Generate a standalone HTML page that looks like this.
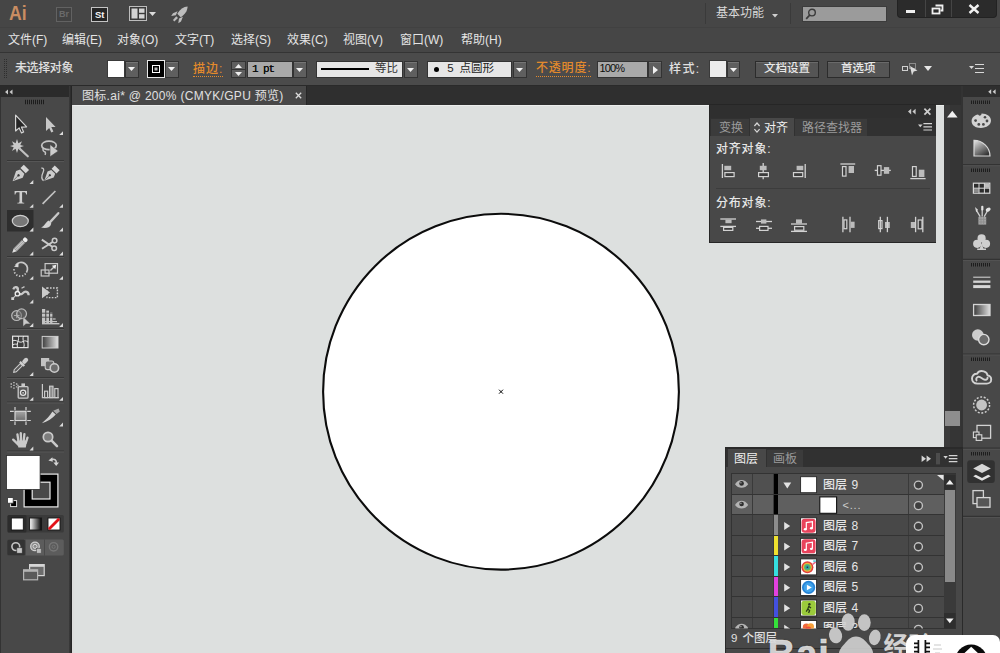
<!DOCTYPE html>
<html lang="zh-CN"><head><meta charset="utf-8"><title>图标.ai* @ 200% (CMYK/GPU 预览)</title>
<style>
html,body{margin:0;padding:0;background:#474747;}
body{width:1000px;height:653px;overflow:hidden;font-family:"Liberation Sans","Noto Sans CJK SC",sans-serif;}
#app{position:relative;width:1000px;height:653px;overflow:hidden;background:#474747;}
#app div,#app span.tx,#app svg.ic{position:absolute;box-sizing:border-box;}
.tx{display:block;line-height:1;white-space:nowrap;overflow:visible;font-family:"Liberation Sans","Noto Sans CJK SC",sans-serif;}
.lat{position:absolute;white-space:nowrap;line-height:1;}
</style></head>
<body>
<div id="app">
<div style="left:72px;top:104.8px;width:872px;height:548.2px;background:#dde0df;border-top:1.4px solid #eceeed;border-left:2px solid #dcdddc"></div>
<svg class="ic" style="left:72px;top:105px" width="872" height="548"><circle cx="429.0" cy="286.7" r="177.9" fill="#fff" stroke="#0c0c0c" stroke-width="2.1"/><path d="M-2-2L2 2M2-2L-2 2" transform="translate(429.0,286.7)" stroke="#0a0a0a" stroke-width="1"/></svg>
<div style="left:0px;top:0px;width:1000px;height:27px;background:#464646;"></div>
<span class="lat" style="left:9px;top:2.4px;font-size:21px;font-weight:bold;color:#c98d62;transform:scaleX(.84);transform-origin:0 0">Ai</span>
<div style="left:705px;top:3px;width:1px;height:21px;background:#3a3a3a;"></div>
<div style="left:790px;top:3px;width:1px;height:21px;background:#3a3a3a;"></div>
<span class="tx " style="left:716.0px;top:7.0px;width:48.0px;height:15.0px;font-size:12px;color:#d8d8d8">基本功能</span>
<div style="left:802px;top:6px;width:85px;height:16px;background:#9b9b9b;border:1px solid #3c3c3c"></div>
<div style="left:897px;top:0px;width:100px;height:18px;background:#2b2b2b;border-radius:0 0 4px 4px;border:1px solid #222;border-top:0"></div>
<div style="left:925px;top:0px;width:1px;height:17px;background:#454545;"></div>
<div style="left:951px;top:0px;width:1px;height:17px;background:#454545;"></div>
<div style="left:0px;top:27px;width:1000px;height:26px;background:#464646;border-top:1px solid #414141;border-bottom:1px solid #343434"></div>
<span class="tx " style="left:8.0px;top:33.5px;width:38.7px;height:15.0px;font-size:12px;color:#e4e4e4">文件(F)</span>
<span class="tx " style="left:62.0px;top:33.5px;width:39.2px;height:15.0px;font-size:12px;color:#e4e4e4">编辑(E)</span>
<span class="tx " style="left:117.0px;top:33.5px;width:41.0px;height:15.0px;font-size:12px;color:#e4e4e4">对象(O)</span>
<span class="tx " style="left:175.0px;top:33.5px;width:39.3px;height:15.0px;font-size:12px;color:#e4e4e4">文字(T)</span>
<span class="tx " style="left:231.0px;top:33.5px;width:39.3px;height:15.0px;font-size:12px;color:#e4e4e4">选择(S)</span>
<span class="tx " style="left:287.0px;top:33.5px;width:39.8px;height:15.0px;font-size:12px;color:#e4e4e4">效果(C)</span>
<span class="tx " style="left:343.0px;top:33.5px;width:39.0px;height:15.0px;font-size:12px;color:#e4e4e4">视图(V)</span>
<span class="tx " style="left:400.0px;top:33.5px;width:42.6px;height:15.0px;font-size:12px;color:#e4e4e4">窗口(W)</span>
<span class="tx " style="left:461.0px;top:33.5px;width:40.8px;height:15.0px;font-size:12px;color:#e4e4e4">帮助(H)</span>
<div style="left:0px;top:53px;width:1000px;height:33px;background:#4b4b4b;border-bottom:1px solid #2a2a2a"></div>
<span class="tx " style="left:15.0px;top:61.5px;width:58.0px;height:15.0px;font-size:12px;font-weight:500;color:#e0e0e0;letter-spacing:-.4px">未选择对象</span>
<div style="left:107px;top:60px;width:18px;height:18px;background:#fff;border:1px solid #3a3a3a"></div>
<div style="left:147px;top:60px;width:18px;height:18px;background:#000;border:1px solid #e8e8e8"></div>
<span class="tx " style="left:193.0px;top:62.5px;width:30.0px;height:15.0px;font-size:12px;font-weight:500;color:#e38a2c;letter-spacing:1px">描边:</span>
<div style="left:247px;top:61px;width:46px;height:17px;background:#a9a9a9;border:1px solid #333"></div>
<span class="lat" style="left:252px;top:63.5px;font-family:'Liberation Mono',monospace;font-size:11px;color:#0c0c0c;letter-spacing:-1.1px;text-shadow:0 0 .4px #111">1 pt</span>
<div style="left:316px;top:61px;width:87px;height:17px;background:#e6e6e6;border:1px solid #333"></div>
<div style="left:321px;top:67.6px;width:48px;height:2.7px;background:#000;"></div>
<span class="tx " style="left:375.0px;top:63.2px;width:23.0px;height:14.4px;font-size:11.5px;color:#333">等比</span>
<div style="left:427px;top:61px;width:85px;height:17px;background:#e6e6e6;border:1px solid #333"></div>
<div style="left:434px;top:67px;width:5px;height:5px;background:#000;border-radius:50%"></div>
<span class="tx " style="left:447.3px;top:63.2px;width:6.4px;height:14.4px;font-size:11.5px;color:#222">5</span>
<span class="tx " style="left:459.6px;top:63.2px;width:34.5px;height:14.4px;font-size:11.5px;color:#222">点圆形</span>
<span class="tx " style="left:536.0px;top:62.0px;width:55.0px;height:15.0px;font-size:12px;font-weight:500;color:#e38a2c;letter-spacing:.8px">不透明度:</span>
<div style="left:597px;top:61px;width:51px;height:17px;background:#a9a9a9;border:1px solid #333"></div>
<span class="lat" style="left:599.5px;top:62.5px;font-size:11px;color:#0c0c0c;letter-spacing:-.9px">100%</span>
<span class="tx " style="left:669.0px;top:62.5px;width:31.0px;height:15.0px;font-size:12px;font-weight:500;color:#e0e0e0;letter-spacing:1.4px">样式:</span>
<div style="left:709px;top:60px;width:18px;height:18px;background:#ebebeb;border:1px solid #3a3a3a"></div>
<div style="left:755px;top:61px;width:64px;height:17px;background:#555;border:1px solid #2c2c2c;box-shadow:inset 0 1px 0 #6a6a6a"></div>
<span class="tx " style="left:764.0px;top:63.2px;width:46.0px;height:14.4px;font-size:11.5px;font-weight:500;color:#e8e8e8">文档设置</span>
<div style="left:827px;top:61px;width:63px;height:17px;background:#555;border:1px solid #2c2c2c;box-shadow:inset 0 1px 0 #6a6a6a"></div>
<span class="tx " style="left:841.0px;top:63.2px;width:35.0px;height:14.4px;font-size:11.5px;font-weight:500;color:#e8e8e8">首选项</span>
<div style="left:0px;top:86px;width:1000px;height:19px;background:#2f2f2f;"></div>
<div style="left:72px;top:86px;width:235.2px;height:18.5px;background:#484848;border-right:1px solid #262626"></div>
<span class="tx " style="left:82.0px;top:89.5px;width:198.5px;height:15.0px;font-size:12px;color:#e0e0e0;letter-spacing:.3px">图标.ai* @ 200% (CMYK/GPU 预览)</span>
<div style="left:0px;top:97px;width:69.5px;height:556px;background:#484848;border-left:1px solid #333"></div>
<div style="left:0px;top:85.5px;width:69.5px;height:11.5px;background:#2b2b2b;"></div>
<div style="left:68.6px;top:86px;width:3.5px;height:567px;background:linear-gradient(90deg,#3c3c3c,#202020);"></div>
<div style="left:944px;top:105px;width:17px;height:343px;background:linear-gradient(90deg,#3b3b3b 0,#3b3b3b 35%,#353535 36%,#353535 100%);"></div>
<div style="left:944.7px;top:411px;width:15.6px;height:15px;background:#8e8e8e;"></div>
<div style="left:961px;top:86px;width:39px;height:567px;background:#333;"></div>
<div style="left:963px;top:97px;width:37px;height:556px;background:#484848;"></div>
<div style="left:963px;top:86px;width:37px;height:11px;background:#2f2f2f;"></div>
<div style="left:709px;top:104px;width:227.4px;height:138.8px;background:#262626;"></div>
<div style="left:710px;top:105px;width:225.6px;height:136.8px;background:#484848;"></div>
<div style="left:710px;top:105px;width:226px;height:13px;background:#2f2f2f;"></div>
<div style="left:710px;top:118px;width:226px;height:18px;background:#313131;"></div>
<div style="left:711px;top:119px;width:38px;height:17px;background:#3b3b3b;"></div>
<div style="left:750px;top:118px;width:44px;height:18px;background:#484848;"></div>
<div style="left:795px;top:119px;width:72px;height:17px;background:#3b3b3b;"></div>
<span class="tx " style="left:719.0px;top:121.5px;width:24.0px;height:15.0px;font-size:12px;color:#9a9a9a">变换</span>
<span class="tx " style="left:764.0px;top:121.5px;width:24.0px;height:15.0px;font-size:12px;color:#f0f0f0">对齐</span>
<span class="tx " style="left:802.0px;top:121.5px;width:60.0px;height:15.0px;font-size:12px;color:#9a9a9a">路径查找器</span>
<span class="tx " style="left:716.0px;top:142.5px;width:55.0px;height:15.0px;font-size:12px;font-weight:500;color:#e6e6e6;letter-spacing:.8px">对齐对象:</span>
<div style="left:716px;top:188px;width:214px;height:1px;background:#3c3c3c;"></div>
<span class="tx " style="left:716.0px;top:196.5px;width:55.0px;height:15.0px;font-size:12px;font-weight:500;color:#e6e6e6;letter-spacing:.8px">分布对象:</span>
<div style="left:725px;top:447px;width:238px;height:206px;background:#2a2a2a;"></div>
<div style="left:726px;top:449px;width:236px;height:204px;background:#484848;"></div>
<div style="left:726px;top:449px;width:236px;height:18px;background:#313131;"></div>
<div style="left:728px;top:449px;width:38px;height:18px;background:#484848;"></div>
<div style="left:767px;top:450px;width:36px;height:17px;background:#3b3b3b;"></div>
<span class="tx " style="left:734.0px;top:452.5px;width:24.0px;height:15.0px;font-size:12px;color:#f0f0f0">图层</span>
<span class="tx " style="left:773.0px;top:452.5px;width:24.0px;height:15.0px;font-size:12px;color:#9a9a9a">画板</span>
<div style="left:731px;top:473px;width:225px;height:156px;background:#333;"></div>
<div style="left:732px;top:474px;width:212px;height:19.55px;background:#505050;"></div>
<div style="left:752px;top:474px;width:1px;height:19.55px;background:#3a3a3a;"></div>
<div style="left:773px;top:474px;width:1px;height:19.55px;background:#3a3a3a;"></div>
<div style="left:908px;top:474px;width:1px;height:19.55px;background:#3a3a3a;"></div>
<div style="left:774.2px;top:474px;width:3.7px;height:19.55px;background:#000;"></div>
<span class="tx " style="left:823.0px;top:478.5px;width:24.0px;height:15.0px;font-size:12px;font-weight:500;color:#e6e6e6">图层</span>
<span class="tx " style="left:851.5px;top:478.5px;width:6.8px;height:15.0px;font-size:12px;font-weight:500;color:#e6e6e6">9</span>
<div style="left:732px;top:494.55px;width:212px;height:19.55px;background:#5f5f5f;"></div>
<div style="left:752px;top:494.55px;width:1px;height:19.55px;background:#3a3a3a;"></div>
<div style="left:773px;top:494.55px;width:1px;height:19.55px;background:#3a3a3a;"></div>
<div style="left:908px;top:494.55px;width:1px;height:19.55px;background:#3a3a3a;"></div>
<div style="left:774.2px;top:494.55px;width:3.7px;height:19.55px;background:#000;"></div>
<span class="tx " style="left:842.5px;top:499.6px;width:19.5px;height:13.8px;font-size:11px;color:#cfcfcf;letter-spacing:.8px">&lt;...</span>
<div style="left:732px;top:515.1px;width:212px;height:19.55px;background:#484848;"></div>
<div style="left:752px;top:515.1px;width:1px;height:19.55px;background:#3a3a3a;"></div>
<div style="left:773px;top:515.1px;width:1px;height:19.55px;background:#3a3a3a;"></div>
<div style="left:908px;top:515.1px;width:1px;height:19.55px;background:#3a3a3a;"></div>
<div style="left:774.2px;top:515.1px;width:3.7px;height:19.55px;background:#8c8c8c;"></div>
<span class="tx " style="left:823.0px;top:519.6px;width:24.0px;height:15.0px;font-size:12px;font-weight:500;color:#e6e6e6">图层</span>
<span class="tx " style="left:851.5px;top:519.6px;width:6.8px;height:15.0px;font-size:12px;font-weight:500;color:#e6e6e6">8</span>
<div style="left:732px;top:535.65px;width:212px;height:19.55px;background:#484848;"></div>
<div style="left:752px;top:535.65px;width:1px;height:19.55px;background:#3a3a3a;"></div>
<div style="left:773px;top:535.65px;width:1px;height:19.55px;background:#3a3a3a;"></div>
<div style="left:908px;top:535.65px;width:1px;height:19.55px;background:#3a3a3a;"></div>
<div style="left:774.2px;top:535.65px;width:3.7px;height:19.55px;background:#efe12f;"></div>
<span class="tx " style="left:823.0px;top:540.1px;width:24.0px;height:15.0px;font-size:12px;font-weight:500;color:#e6e6e6">图层</span>
<span class="tx " style="left:851.5px;top:540.1px;width:6.8px;height:15.0px;font-size:12px;font-weight:500;color:#e6e6e6">7</span>
<div style="left:732px;top:556.2px;width:212px;height:19.55px;background:#484848;"></div>
<div style="left:752px;top:556.2px;width:1px;height:19.55px;background:#3a3a3a;"></div>
<div style="left:773px;top:556.2px;width:1px;height:19.55px;background:#3a3a3a;"></div>
<div style="left:908px;top:556.2px;width:1px;height:19.55px;background:#3a3a3a;"></div>
<div style="left:774.2px;top:556.2px;width:3.7px;height:19.55px;background:#35dfe0;"></div>
<span class="tx " style="left:823.0px;top:560.7px;width:24.0px;height:15.0px;font-size:12px;font-weight:500;color:#e6e6e6">图层</span>
<span class="tx " style="left:851.5px;top:560.7px;width:6.8px;height:15.0px;font-size:12px;font-weight:500;color:#e6e6e6">6</span>
<div style="left:732px;top:576.75px;width:212px;height:19.55px;background:#484848;"></div>
<div style="left:752px;top:576.75px;width:1px;height:19.55px;background:#3a3a3a;"></div>
<div style="left:773px;top:576.75px;width:1px;height:19.55px;background:#3a3a3a;"></div>
<div style="left:908px;top:576.75px;width:1px;height:19.55px;background:#3a3a3a;"></div>
<div style="left:774.2px;top:576.75px;width:3.7px;height:19.55px;background:#e241e0;"></div>
<span class="tx " style="left:823.0px;top:581.2px;width:24.0px;height:15.0px;font-size:12px;font-weight:500;color:#e6e6e6">图层</span>
<span class="tx " style="left:851.5px;top:581.2px;width:6.8px;height:15.0px;font-size:12px;font-weight:500;color:#e6e6e6">5</span>
<div style="left:732px;top:597.3px;width:212px;height:19.55px;background:#484848;"></div>
<div style="left:752px;top:597.3px;width:1px;height:19.55px;background:#3a3a3a;"></div>
<div style="left:773px;top:597.3px;width:1px;height:19.55px;background:#3a3a3a;"></div>
<div style="left:908px;top:597.3px;width:1px;height:19.55px;background:#3a3a3a;"></div>
<div style="left:774.2px;top:597.3px;width:3.7px;height:19.55px;background:#4350e0;"></div>
<span class="tx " style="left:823.0px;top:601.8px;width:24.0px;height:15.0px;font-size:12px;font-weight:500;color:#e6e6e6">图层</span>
<span class="tx " style="left:851.5px;top:601.8px;width:6.8px;height:15.0px;font-size:12px;font-weight:500;color:#e6e6e6">4</span>
<div style="left:732px;top:617.85px;width:212px;height:10.65px;background:#484848;"></div>
<div style="left:752px;top:617.85px;width:1px;height:10.65px;background:#3a3a3a;"></div>
<div style="left:773px;top:617.85px;width:1px;height:10.65px;background:#3a3a3a;"></div>
<div style="left:908px;top:617.85px;width:1px;height:10.65px;background:#3a3a3a;"></div>
<div style="left:774.2px;top:617.85px;width:3.7px;height:10.65px;background:#35e03a;"></div>
<div style="left:823px;top:617.85px;width:60px;height:10.65px;overflow:hidden"><span class="tx " style="left:0.0px;top:4.5px;width:24.0px;height:15.0px;font-size:12px;font-weight:500;color:#e6e6e6">图层</span><span class="tx " style="left:28.5px;top:4.5px;width:6.8px;height:15.0px;font-size:12px;font-weight:500;color:#e6e6e6">3</span></div>
<div style="left:944px;top:474px;width:12px;height:154px;background:#3a3a3a;"></div>
<div style="left:945px;top:490px;width:10px;height:92px;background:#8a8a8a;"></div>
<div style="left:726px;top:629px;width:236px;height:20px;background:#484848;"></div>
<span class="tx " style="left:731.0px;top:633.0px;width:6.6px;height:14.4px;font-size:11.5px;font-weight:500;color:#e0e0e0">9</span>
<span class="tx " style="left:742.6px;top:633.0px;width:34.6px;height:14.4px;font-size:11.5px;font-weight:500;color:#e0e0e0">个图层</span>
<div style="left:726px;top:648px;width:236px;height:1.2px;background:#2e2e2e;"></div>
<div style="left:56px;top:7px;width:16px;height:15px;background:#424242;border:1px solid #626262"></div>
<span class="lat" style="left:59px;top:10px;font-size:9px;font-weight:bold;color:#6a6a6a">Br</span>
<div style="left:91px;top:7px;width:17px;height:15px;background:#262626;border:1px solid #c4c4c4"></div>
<span class="lat" style="left:95px;top:9.8px;font-size:9.5px;font-weight:bold;color:#f4f4f4;letter-spacing:-.2px">St</span>
<svg class="ic" style="left:129px;top:6px;" width="18" height="15" viewBox="0 0 18 15"><rect x=".5" y=".5" width="17" height="14" fill="#3a3a3a" stroke="#bdbdbd"/><rect x="2.5" y="2.5" width="6" height="10" fill="#d4d4d4"/><rect x="10" y="2.5" width="5.5" height="4.3" fill="#d4d4d4"/><rect x="10" y="8.2" width="5.5" height="4.3" fill="#d4d4d4"/></svg>
<svg class="ic" style="left:149px;top:12px;" width="7" height="4" viewBox="0 0 7 4"><path d="M0 0H7L3.5 4Z" fill="#dcdcdc"/></svg>
<svg class="ic" style="left:170px;top:5px;" width="20" height="19" viewBox="0 0 20 19"><g fill="#bdbdbd"><path d="M17.6 1.6C13.6 1.8 9.9 4.3 7.3 8.7L10.7 12.2C14.9 9.8 17.4 6 17.6 1.6Z"/><path d="M7.6 6.2L3 8.2L1.2 10.9L5.8 10.2Z"/><path d="M12.9 11.8L11 16.4L8.3 18.2L9 13.6Z"/><path d="M6.3 11.3L8 13L4.3 16.4L3 15.1Z"/></g></svg>
<svg class="ic" style="left:772px;top:14px;" width="7" height="4" viewBox="0 0 7 4"><path d="M0 0H6L3 3.5Z" fill="#cfcfcf"/></svg>
<svg class="ic" style="left:805px;top:8px;" width="12" height="12" viewBox="0 0 12 12"><circle cx="7" cy="4.6" r="3.3" fill="none" stroke="#3a3a3a" stroke-width="1.4"/><path d="M4.8 7L1.2 10.8" stroke="#3a3a3a" stroke-width="1.8"/></svg>
<div style="left:906px;top:10px;width:9px;height:3px;background:#f0f0f0;"></div>
<svg class="ic" style="left:931px;top:4px;" width="13" height="11" viewBox="0 0 13 11"><path d="M4.5 1.5H11.5V6.5H9.5" fill="none" stroke="#f0f0f0" stroke-width="1.8"/><rect x="1.5" y="4.5" width="7" height="5" fill="none" stroke="#f0f0f0" stroke-width="1.8"/></svg>
<svg class="ic" style="left:968px;top:4px;" width="12" height="10" viewBox="0 0 12 10"><path d="M1.5 1L10.5 9M10.5 1L1.5 9" stroke="#f0f0f0" stroke-width="2.4"/></svg>
<svg class="ic" style="left:4px;top:59px;" width="4" height="20" viewBox="0 0 4 20"><path d="M.5 0V20M2.5 0V20" stroke="#2e2e2e" stroke-width="1" stroke-dasharray="1 1"/></svg>
<div style="left:125px;top:60.5px;width:14px;height:17.5px;background:#5f5f5f;border:1px solid #333;box-shadow:inset 0 1px 0 #757575"></div><svg class="ic" style="left:128px;top:67px;" width="7" height="4" viewBox="0 0 7 4"><path d="M0 0H7L3.5 4Z" fill="#f2f2f2"/></svg>
<div style="left:165px;top:60.5px;width:14px;height:17.5px;background:#5f5f5f;border:1px solid #333;box-shadow:inset 0 1px 0 #757575"></div><svg class="ic" style="left:168px;top:67px;" width="7" height="4" viewBox="0 0 7 4"><path d="M0 0H7L3.5 4Z" fill="#f2f2f2"/></svg>
<svg class="ic" style="left:152px;top:65px;" width="8" height="8" viewBox="0 0 8 8"><rect x=".5" y=".5" width="7" height="7" fill="#000" stroke="#fff"/><rect x="2.5" y="2.5" width="3" height="3" fill="#bdbdbd"/></svg>
<div style="left:193px;top:76px;width:30px;height:1px;background:none;border-bottom:1px dotted #e38a2c"></div>
<div style="left:536px;top:76px;width:55px;height:1px;background:none;border-bottom:1px dotted #e38a2c"></div>
<div style="left:231px;top:61px;width:15px;height:17px;background:#5f5f5f;border:1px solid #333"></div>
<div style="left:232px;top:69px;width:13px;height:1px;background:#333;"></div>
<svg class="ic" style="left:235px;top:63.5px;" width="7" height="12" viewBox="0 0 7 12"><path d="M0 4L3.5 0L7 4ZM0 8H7L3.5 12Z" fill="#efefef"/></svg>
<div style="left:293px;top:61px;width:14px;height:17px;background:#5f5f5f;border:1px solid #333;box-shadow:inset 0 1px 0 #757575"></div><svg class="ic" style="left:296px;top:67.5px;" width="7" height="4" viewBox="0 0 7 4"><path d="M0 0H7L3.5 4Z" fill="#f2f2f2"/></svg>
<div style="left:404px;top:61px;width:14px;height:17px;background:#5f5f5f;border:1px solid #333;box-shadow:inset 0 1px 0 #757575"></div><svg class="ic" style="left:407px;top:67.5px;" width="7" height="4" viewBox="0 0 7 4"><path d="M0 0H7L3.5 4Z" fill="#f2f2f2"/></svg>
<div style="left:513px;top:61px;width:14px;height:17px;background:#5f5f5f;border:1px solid #333;box-shadow:inset 0 1px 0 #757575"></div><svg class="ic" style="left:516px;top:67.5px;" width="7" height="4" viewBox="0 0 7 4"><path d="M0 0H7L3.5 4Z" fill="#f2f2f2"/></svg>
<div style="left:648px;top:61px;width:14px;height:17px;background:#5f5f5f;border:1px solid #333;box-shadow:inset 0 1px 0 #757575"></div>
<svg class="ic" style="left:653px;top:65.5px;" width="5" height="8" viewBox="0 0 5 8"><path d="M0 0L5 4L0 8Z" fill="#f2f2f2"/></svg>
<div style="left:727px;top:61px;width:13px;height:17px;background:#5f5f5f;border:1px solid #333;box-shadow:inset 0 1px 0 #757575"></div><svg class="ic" style="left:730px;top:67.5px;" width="7" height="4" viewBox="0 0 7 4"><path d="M0 0H7L3.5 4Z" fill="#f2f2f2"/></svg>
<svg class="ic" style="left:902px;top:61px;" width="17" height="16" viewBox="0 0 17 16"><rect x=".5" y="5.5" width="5" height="4" fill="none" stroke="#cfcfcf"/><rect x="7.5" y="2.5" width="6" height="5" fill="none" stroke="#cfcfcf" stroke-dasharray="1 1"/><path d="M8 5L15.5 9.5L11.7 10.4L10 14.5Z" fill="#dcdcdc"/></svg>
<svg class="ic" style="left:924px;top:66px;" width="8" height="5" viewBox="0 0 8 5"><path d="M0 0H8L4 5Z" fill="#e6e6e6"/></svg>
<svg class="ic" style="left:969px;top:63px;" width="16" height="11" viewBox="0 0 16 11"><path d="M0 3H5L2.5 6Z" fill="#d8d8d8"/><path d="M6 1.5H15M6 5.5H15M6 9.5H15" stroke="#d8d8d8" stroke-width="1.2"/></svg>
<svg class="ic" style="left:0;top:86px" width="72" height="567" viewBox="0 86 72 567"><path d="M8 89.5V94.5L5 92ZM12.5 89.5V94.5L9.5 92Z" fill="#c9c9c9"/><path d="M25 102H45" stroke="#1c1c1c" stroke-width="4.6" stroke-dasharray="1 1"/><path d="M7 160.5H64" stroke="#363636"/><path d="M7 161.5H64" stroke="#565656"/><path d="M7 256.5H64" stroke="#363636"/><path d="M7 257.5H64" stroke="#565656"/><path d="M7 328.5H64" stroke="#363636"/><path d="M7 329.5H64" stroke="#565656"/><path d="M7 377.5H64" stroke="#363636"/><path d="M7 378.5H64" stroke="#565656"/><path d="M7 402H64" stroke="#363636"/><path d="M7 403H64" stroke="#565656"/><path d="M7 451H64" stroke="#363636"/><path d="M7 452H64" stroke="#565656"/><path d="M63 131.3V135.1H59.2Z" fill="#dadada"/><path d="M33.3 180.1V183.9H29.5Z" fill="#dadada"/><path d="M33.3 203.9V207.7H29.5Z" fill="#dadada"/><path d="M63 203.9V207.7H59.2Z" fill="#dadada"/><path d="M33.3 227.6V231.4H29.5Z" fill="#dadada"/><path d="M63 227.6V231.4H59.2Z" fill="#dadada"/><path d="M33.3 251.6V255.4H29.5Z" fill="#dadada"/><path d="M63 251.6V255.4H59.2Z" fill="#dadada"/><path d="M33.3 275.9V279.7H29.5Z" fill="#dadada"/><path d="M63 275.9V279.7H59.2Z" fill="#dadada"/><path d="M33.3 299.6V303.4H29.5Z" fill="#dadada"/><path d="M33.3 323.1V326.9H29.5Z" fill="#dadada"/><path d="M63 323.1V326.9H59.2Z" fill="#dadada"/><path d="M33.3 372.1V375.9H29.5Z" fill="#dadada"/><path d="M33.3 396.9V400.7H29.5Z" fill="#dadada"/><path d="M63 396.9V400.7H59.2Z" fill="#dadada"/><path d="M63 422.6V426.4H59.2Z" fill="#dadada"/><path d="M33.3 446.6V450.4H29.5Z" fill="#dadada"/><path d="M15.6 115.2V131L19.2 127.9L21.5 132.9L23.6 131.9L21.4 127.1L26.6 126.8Z" fill="#262626" stroke="#d4d4d4" stroke-width="1.2" stroke-linejoin="round"/><path d="M46 117V131L49.2 128L51.3 132.6L53.4 131.6L51.3 127.1L55.6 126.9Z" fill="#c8c8c8"/><path d="M17 139L18.4 143.3L22 141.2L20.3 144.9L24 146L20.3 147.2L22 151L18.4 148.8L17 153L15.6 148.8L12 151L13.7 147.2L10 146L13.7 144.9L12 141.2L15.6 143.3Z" fill="#c9c9c9"/><path d="M19.5 148.5L27.8 156.3" stroke="#c0c0c0" stroke-width="2.2" stroke-linecap="round"/><ellipse cx="49" cy="145.4" rx="7.3" ry="4.3" fill="none" stroke="#c4c4c4" stroke-width="1.7"/><path d="M43.3 148.3C42.6 150 43.2 151.5 44.6 151.8C45.6 152 45.8 153.3 45 154.8" fill="none" stroke="#c4c4c4" stroke-width="1.5"/><path d="M50 144.5V156.8L58.3 151Z" fill="#cdcdcd" stroke="#484848" stroke-width=".6"/><g transform="translate(12.6 181.2) rotate(-45)"><path d="M0 0L9.6 -4.7L13.6 -3V3L9.6 4.7Z" fill="#cccccc"/><path d="M1.5 0H7.4" stroke="#6c6c6c" stroke-width=".8"/><circle cx="8.4" cy="0" r="1.25" fill="#3a3a3a"/><rect x="14.8" y="-3.7" width="4.8" height="7.4" fill="#d6d6d6"/></g><g transform="translate(44.3 180.8) rotate(-45) scale(.93)"><path d="M0 0L9.6 -4.7L13.6 -3V3L9.6 4.7Z" fill="#cccccc"/><path d="M1.5 0H7.4" stroke="#6c6c6c" stroke-width=".8"/><circle cx="8.4" cy="0" r="1.25" fill="#3a3a3a"/><rect x="14.8" y="-3.7" width="4.8" height="7.4" fill="#d6d6d6"/></g><path d="M41.3 168.2C43.6 167.6 44.3 169.6 43.2 172C41.6 175.5 40.4 178.6 43.6 180.6" fill="none" stroke="#c8c8c8" stroke-width="1.3"/><path d="M14.6 191H27V194.6H26.2C25.9 192.9 25.3 192.3 23.8 192.3H22.1V201.2C22.1 202.4 22.5 202.7 24.2 202.8V203.6H17.4V202.8C19.1 202.7 19.5 202.4 19.5 201.2V192.3H17.8C16.3 192.3 15.7 192.9 15.4 194.6H14.6Z" fill="#cfcfcf"/><path d="M42.6 203.8L55.4 191" stroke="#c2c2c2" stroke-width="1.7"/><rect x="7" y="210" width="26.5" height="21.5" fill="#2e2e2e"/><path d="M33.3 227.6V231.4H29.5Z" fill="#dadada"/><ellipse cx="20.3" cy="221" rx="8" ry="5.7" fill="#787878" stroke="#cfcfcf" stroke-width="1.2"/><path d="M58.3 213.2L50.3 221.9" stroke="#c8c8c8" stroke-width="2.3" stroke-linecap="round"/><path d="M48.4 220.6L51.3 223.4C50.6 227.3 46.5 228.8 41 227.6C44.3 226.6 45.2 222.8 48.4 220.6Z" fill="#d2d2d2"/><g transform="translate(12.2 252.8) rotate(-45)"><path d="M0 0L4.4-2.2V2.2Z" fill="#dedede"/><rect x="4.4" y="-2.2" width="11.6" height="4.4" fill="#a9a9a9"/><path d="M4.4 -.7H16M4.4 .8H16" stroke="#cfcfcf" stroke-width=".7"/><rect x="16.4" y="-2.3" width="4" height="4.6" rx="1.6" fill="#efefef"/></g><g fill="none" stroke="#cacaca"><circle cx="54.6" cy="240.6" r="2.3" stroke-width="1.5"/><circle cx="54.2" cy="248.2" r="2.3" stroke-width="1.5"/><path d="M52.6 242L42 248.8M52.3 246.8L41.8 239.6" stroke-width="1.9"/></g><g fill="none" stroke="#c8c8c8"><path d="M15.8 265.2A6.4 6.4 0 0 1 26.4 272.4" stroke-width="1.7"/><path d="M25.6 273.6A6.4 6.4 0 0 1 14.3 268" stroke-width="1.7" stroke-dasharray="1.3 1.7"/></g><path d="M14 266.8L18.6 262.6L18.4 267.3Z" fill="#d6d6d6"/><g fill="none" stroke="#c8c8c8" stroke-width="1.2"><rect x="45.1" y="263.6" width="12.4" height="9.6"/><rect x="41.2" y="270" width="7.8" height="6"/></g><path d="M50.4 270.6L54 267" stroke="#c8c8c8" stroke-width="1.4"/><path d="M56.3 264.8L51.8 265.8L55.3 269.3Z" fill="#ececec"/><path d="M13.3 289.3C14.4 286 18.5 286.8 17.8 290.3C17.2 293.6 20.6 295.6 23 293C25 290.8 28.6 291.2 28.6 295.2" fill="none" stroke="#c8c8c8" stroke-width="2.3"/><path d="M16 295.2L13.4 297.8" stroke="#c8c8c8" stroke-width="1.1"/><rect x="11.3" y="297.2" width="2.8" height="2.8" fill="#d0d0d0"/><circle cx="17.4" cy="293.7" r="2.2" fill="#484848" stroke="#ececec" stroke-width="1.3"/><path d="M21.5 288.2L24.5 286.6" stroke="#c8c8c8" stroke-width="1.2"/><rect x="47" y="288" width="10.4" height="9.6" fill="none" stroke="#cdcdcd" stroke-width="1.4" stroke-dasharray="1.6 1.4"/><path d="M42 286.4V298.2L50 292.4Z" fill="#cacaca"/><g fill="#6a6a6a" fill-opacity=".55" stroke="#b9b9b9" stroke-width="1.2"><circle cx="16.6" cy="315.6" r="4.9"/><circle cx="21.6" cy="313.8" r="4.9"/></g><path d="M14 315.5H19.5M16.7 312.8V318.2" stroke="#b0b0b0" stroke-width=".9"/><path d="M23 316.6V326.6L25.9 323.9H30.6Z" fill="#c9c9c9" stroke="#484848" stroke-width=".5"/><g fill="#c4c4c4"><rect x="42" y="309" width="3.2" height="14.6"/><rect x="46.3" y="310.6" width="2.7" height="13"/><rect x="50.1" y="312.6" width="2.3" height="11"/><rect x="42" y="321" width="15" height="1.2"/><rect x="42" y="323" width="17.4" height="1.4"/><rect x="53" y="318.4" width="2.6" height="1.2"/></g><path d="M42 313.2H53M42 317.2H53" stroke="#484848" stroke-width=".9"/><rect x="12.6" y="336.2" width="15.4" height="11.4" fill="#3e3e3e" stroke="#e4e4e4" stroke-width="1.2"/><path d="M12.6 341C16 338.5 19 344 23 341.5C25 340.3 26.5 341 28 342M18 336.2C20 339 16 343.5 17.6 347.6M23.6 336.2C21.6 340 25.6 343.6 23.6 347.6M12.6 345C15 343.4 16.5 344.6 18 344" fill="none" stroke="#ececec" stroke-width="1"/><defs><linearGradient id="gt"><stop offset="0" stop-color="#3e3e3e"/><stop offset="1" stop-color="#e2e2e2"/></linearGradient><linearGradient id="gv" x2="0" y2="1"><stop offset="0" stop-color="#a6a6a6"/><stop offset="1" stop-color="#6e6e6e"/></linearGradient></defs><rect x="42.2" y="336.4" width="15.8" height="11.6" fill="url(#gt)" stroke="#cfcfcf" stroke-width="1"/><g transform="translate(13.7 372.3) rotate(-45)"><path d="M0 0L2.2-1.5H11V1.5H2.2Z" fill="#5a5a5a" stroke="#d4d4d4" stroke-width="1"/><rect x="10.8" y="-3.1" width="2.2" height="6.2" fill="#d0d0d0"/><rect x="13" y="-2.1" width="6.6" height="4.2" rx="2" fill="#cdcdcd"/></g><rect x="41" y="358" width="8.2" height="8.2" fill="#c2c2c2"/><rect x="45.2" y="361" width="8.6" height="8.6" rx="2" fill="#686868" stroke="#c8c8c8" stroke-width="1.1"/><circle cx="54.4" cy="368" r="4.2" fill="#6c6c6c" stroke="#cacaca" stroke-width="1.6"/><rect x="18.2" y="386.6" width="9.8" height="11.6" rx="1" fill="#585858" stroke="#cacaca" stroke-width="1.3"/><rect x="21.4" y="383.4" width="3.6" height="3.2" fill="#cacaca"/><circle cx="23.1" cy="392.8" r="2.6" fill="#444" stroke="#e2e2e2" stroke-width="1.3"/><circle cx="23.1" cy="392.8" r=".9" fill="#d6d6d6"/><path d="M10.5 384H12M13.2 385.4H14.7M15.9 384H17.4M13.2 382.6H14.7M10.5 386.8H12M15.9 386.8H17.4M13.2 388.2H14.7M17.4 385.4H18.6" stroke="#bdbdbd" stroke-width="1.3"/><g fill="none" stroke="#cacaca" stroke-width="1.2"><path d="M42.4 384V397.6H58.8"/><rect x="44.6" y="391.2" width="3" height="6.4"/><rect x="49.6" y="386.2" width="3.4" height="11.4" fill="#8c8c8c"/><rect x="54.8" y="388.6" width="3.2" height="9"/></g><rect x="15" y="411.3" width="11" height="9.2" fill="url(#gv)" stroke="#d8d8d8" stroke-width="1.2"/><path d="M15 407V410.2M26 407V410.2M15 421.6V425M26 421.6V425M10 411.3H13.8M27.2 411.3H30.8M10 420.5H13.8M27.2 420.5H30.8" stroke="#d4d4d4" stroke-width="1.2"/><path d="M41.8 423.2C46.5 419.4 50 415.6 52.4 411.6L55.8 414.6C52.4 418.6 47.6 421.8 41.8 423.2Z" fill="#d2d2d2"/><path d="M53.2 410.8L58.6 408.6L59.8 411.4L56.6 414Z" fill="#a8a8a8"/><g stroke="#c9c9c9" stroke-width="2.3" stroke-linecap="round"><path d="M18.3 444.6L13.2 439.6M18.6 442L17.4 434.3M21.1 442L20.8 433.2M23.6 442L24.4 434.2M25.8 443L27.5 437.7"/></g><path d="M16.6 440.6H27L25.8 447.6H18.4Z" fill="#c9c9c9"/><circle cx="48" cy="437" r="4.7" fill="#7c7c7c" stroke="#cacaca" stroke-width="1.7"/><path d="M51.6 440.6L57 446.2" stroke="#cacaca" stroke-width="2.5" stroke-linecap="round"/><rect x="24.1" y="474.1" width="33.8" height="32.8" fill="#000" stroke="#ececec" stroke-width="1.2"/><rect x="32.2" y="482.2" width="17.8" height="16.8" fill="#484848" stroke="#ececec" stroke-width="1.2"/><rect x="6.5" y="455.5" width="33.6" height="34" fill="#fff" stroke="#2c2c2c" stroke-width=".8"/><path d="M51.4 459.6C54.6 458.4 56.8 460.4 56.2 463.4" fill="none" stroke="#cacaca" stroke-width="1.6"/><path d="M48.4 460.4L52.4 457.2L52.8 461.8ZM53.4 462.6H59L56.2 466Z" fill="#d4d4d4"/><rect x="10.6" y="500.6" width="6" height="6" fill="#000" stroke="#e2e2e2" stroke-width="1"/><rect x="7.6" y="497.6" width="5.6" height="5.6" fill="#fff" stroke="#333" stroke-width=".8"/><rect x="7.5" y="515" width="56.3" height="17.6" rx="1.5" fill="#3a3a3a"/><rect x="7.5" y="515" width="19" height="17.6" rx="1.5" fill="#2c2c2c"/><defs><linearGradient id="gw"><stop offset="0" stop-color="#fff"/><stop offset="1" stop-color="#000"/></linearGradient></defs><rect x="11.3" y="518" width="12" height="12" fill="#fff" stroke="#161616" stroke-width=".9"/><rect x="29.6" y="518" width="12" height="12" fill="url(#gw)" stroke="#161616" stroke-width=".9"/><rect x="48" y="518" width="12" height="12" fill="#fff" stroke="#161616" stroke-width=".9"/><path d="M48.8 529.2L59.2 518.8" stroke="#e3131b" stroke-width="2.8"/><rect x="7.2" y="539.6" width="56.6" height="16" rx="1.5" fill="#5c5c5c"/><rect x="7.2" y="539.6" width="18" height="16" rx="1.5" fill="#333"/><path d="M25.2 539.6V555.6M44.5 539.6V555.6" stroke="#444" stroke-width=".8"/><circle cx="15.8" cy="546.6" r="3.9" fill="none" stroke="#c6c6c6" stroke-width="1.6"/><rect x="16.8" y="547.8" width="5.4" height="5.4" fill="#c6c6c6" stroke="#333" stroke-width=".6"/><circle cx="35" cy="546.4" r="4.3" fill="#8a8a8a" stroke="#cfcfcf" stroke-width="1.3"/><circle cx="35" cy="546.4" r="2" fill="none" stroke="#d8d8d8" stroke-width="1"/><rect x="36.6" y="548.6" width="4.6" height="4.6" fill="#bdbdbd" stroke="#555" stroke-width=".6"/><circle cx="53.6" cy="546.8" r="4.2" fill="none" stroke="#777" stroke-width="1.4"/><circle cx="53.6" cy="546.8" r="1.6" fill="none" stroke="#747474" stroke-width="1"/><rect x="29.6" y="564.6" width="14.6" height="11" fill="#6c6c6c" stroke="#d6d6d6" stroke-width="1.2"/><rect x="29.6" y="564.6" width="14.6" height="2.2" fill="#d6d6d6"/><rect x="23.6" y="569.8" width="14" height="10" fill="#5a5a5a" stroke="#b4b4b4" stroke-width="1.2"/><rect x="23.6" y="569.8" width="14" height="2" fill="#b4b4b4"/></svg>
<svg class="ic" style="left:710px;top:105px" width="226" height="137" viewBox="710 105 226 137"><path d="M911.2 108.8V114.4L908 111.6ZM915.6 108.8V114.4L912.4 111.6Z" fill="#c9c9c9"/><path d="M924.4 108.6L930.4 114.6M930.4 108.6L924.4 114.6" stroke="#cfcfcf" stroke-width="1.7"/><path d="M754.4 126L757 123L759.6 126M754.4 129.2L757 132.2L759.6 129.2" fill="none" stroke="#d8d8d8" stroke-width="1.2"/><path d="M918 124.4H922.6L920.3 127.2Z" fill="#d4d4d4"/><path d="M923.4 123.6H932M923.4 126.8H932M923.4 130H932" stroke="#d4d4d4" stroke-width="1.2"/><path d="M722.4 164V178" stroke="#d2d2d2" stroke-width="1.3"/><rect x="724.3" y="165.8" width="6.9" height="4.4" fill="#bcbcbc"/><rect x="724.9" y="172.6" width="9.2" height="4" fill="#3c3c3c" stroke="#d2d2d2" stroke-width="1.2"/><path d="M763.2 163V179.2" stroke="#d2d2d2" stroke-width="1.3"/><rect x="759.8" y="165.8" width="6.8" height="4.4" fill="#bcbcbc"/><rect x="758.6" y="172.6" width="9.8" height="4" fill="#3c3c3c" stroke="#d2d2d2" stroke-width="1.2"/><path d="M805.2 164V178" stroke="#d2d2d2" stroke-width="1.3"/><rect x="796.6" y="165.8" width="6.7" height="4.4" fill="#bcbcbc"/><rect x="793.5" y="172.6" width="9.2" height="4" fill="#3c3c3c" stroke="#d2d2d2" stroke-width="1.2"/><path d="M840.4 164H855.2" stroke="#d2d2d2" stroke-width="1.3"/><rect x="842.5" y="166.6" width="3.5" height="9.5" fill="#3c3c3c" stroke="#d2d2d2" stroke-width="1.2"/><rect x="848.6" y="166" width="5.4" height="7" fill="#bcbcbc"/><path d="M874.7 170.4H890.8" stroke="#d2d2d2" stroke-width="1.3"/><rect x="877.5" y="165.7" width="3.5" height="9.5" fill="#3c3c3c" stroke="#d2d2d2" stroke-width="1.2"/><rect x="883.9" y="167.1" width="5.3" height="6.7" fill="#bcbcbc"/><path d="M910.3 178.6H925.6" stroke="#d2d2d2" stroke-width="1.3"/><rect x="912.5" y="166.6" width="3.7" height="9.8" fill="#3c3c3c" stroke="#d2d2d2" stroke-width="1.2"/><rect x="918.8" y="169.7" width="5.6" height="7.3" fill="#bcbcbc"/><path d="M720.3 219H736" stroke="#d2d2d2" stroke-width="1.3"/><rect x="725.4" y="219.6" width="6.2" height="3.6" fill="#bcbcbc"/><path d="M720.3 226.4H736" stroke="#d2d2d2" stroke-width="1.3"/><rect x="723.6" y="227.4" width="9.2" height="3" fill="#3c3c3c" stroke="#d2d2d2" stroke-width="1.2"/><path d="M756 221.5H772" stroke="#d2d2d2" stroke-width="1.3"/><rect x="761" y="219.4" width="5.4" height="4.2" fill="#bcbcbc"/><path d="M756 228.3H772" stroke="#d2d2d2" stroke-width="1.3"/><rect x="759.6" y="226.4" width="8.4" height="4" fill="#3c3c3c" stroke="#d2d2d2" stroke-width="1.2"/><rect x="796" y="219.4" width="6" height="4" fill="#bcbcbc"/><path d="M791 224H807" stroke="#d2d2d2" stroke-width="1.3"/><rect x="794.6" y="226.6" width="9.2" height="3.6" fill="#3c3c3c" stroke="#d2d2d2" stroke-width="1.2"/><path d="M791 231.4H807" stroke="#d2d2d2" stroke-width="1.3"/><path d="M842.9 216.8V232.2" stroke="#d2d2d2" stroke-width="1.3"/><rect x="844" y="219.9" width="2.8" height="8.8" fill="#3c3c3c" stroke="#d2d2d2" stroke-width="1.2"/><path d="M850 216.8V232.2" stroke="#d2d2d2" stroke-width="1.3"/><rect x="850.6" y="221.7" width="4" height="6.2" fill="#bcbcbc"/><rect x="878.7" y="220.6" width="3.3" height="8" fill="#3c3c3c" stroke="#d2d2d2" stroke-width="1.2"/><path d="M880.3 216.8V232.2" stroke="#d2d2d2" stroke-width="1.3"/><rect x="885" y="222" width="4.8" height="6" fill="#bcbcbc"/><path d="M887.4 216.8V232.2" stroke="#d2d2d2" stroke-width="1.3"/><rect x="910.8" y="222" width="4.2" height="6" fill="#bcbcbc"/><path d="M915.6 216.8V232.2" stroke="#d2d2d2" stroke-width="1.3"/><rect x="918.2" y="220" width="3.8" height="8.8" fill="#3c3c3c" stroke="#d2d2d2" stroke-width="1.2"/><path d="M922.8 216.8V232.2" stroke="#d2d2d2" stroke-width="1.3"/></svg>
<svg class="ic" style="left:726px;top:449px" width="236" height="204" viewBox="726 449 236 204"><path d="M921.6 455.4L926 458.7L921.6 462ZM926.6 455.4L931 458.7L926.6 462Z" fill="#d6d6d6"/><rect x="936" y="453" width="4" height="11.4" fill="#4c4c4c"/><path d="M943.4 456H947.8L945.6 458.8Z" fill="#d4d4d4"/><path d="M948.8 455.6H957.4M948.8 458.6H957.4M948.8 461.6H957.4" stroke="#d4d4d4" stroke-width="1.2"/><path d="M735 484.3C738.2 478.6 745 478.6 748.2 484.3C745 489 738.2 489 735 484.3Z" fill="#b4b4b4"/><circle cx="741.6" cy="483.4" r="2.3" fill="#2e2e2e"/><circle cx="740.9" cy="482.8" r=".8" fill="#9a9a9a"/><path d="M735 504.9C738.2 499.2 745 499.2 748.2 504.9C745 509.6 738.2 509.6 735 504.9Z" fill="#b4b4b4"/><circle cx="741.6" cy="504" r="2.3" fill="#2e2e2e"/><circle cx="740.9" cy="503.4" r=".8" fill="#9a9a9a"/><clipPath id="cl8"><rect x="732" y="618" width="212" height="10.4"/></clipPath><g clip-path="url(#cl8)"><path d="M735 628.1C738.2 622.4 745 622.4 748.2 628.1C745 632.8 738.2 632.8 735 628.1Z" fill="#b4b4b4"/><circle cx="741.6" cy="627.2" r="2.3" fill="#2e2e2e"/><circle cx="740.9" cy="626.6" r=".8" fill="#9a9a9a"/><circle cx="918.4" cy="629.4" r="4" fill="none" stroke="#c2c2c2" stroke-width="1.4"/></g><path d="M783.4 482.4H791.2L787.3 488.4Z" fill="#e2e2e2"/><path d="M784.2 522.1V529.9L790.2 526Z" fill="#e2e2e2"/><path d="M784.2 542.65V550.45L790.2 546.55Z" fill="#e2e2e2"/><path d="M784.2 563.2V571L790.2 567.1Z" fill="#e2e2e2"/><path d="M784.2 583.75V591.55L790.2 587.65Z" fill="#e2e2e2"/><path d="M784.2 604.3V612.1L790.2 608.2Z" fill="#e2e2e2"/><g clip-path="url(#cl8)"><path d="M784.2 624.8V632.6L790.2 628.7Z" fill="#e2e2e2"/></g><circle cx="918.4" cy="485.1" r="4" fill="#3e3e3e" stroke="#c2c2c2" stroke-width="1.4"/><circle cx="918.4" cy="505.65" r="4" fill="#3e3e3e" stroke="#c2c2c2" stroke-width="1.4"/><circle cx="918.4" cy="526.2" r="4" fill="#3e3e3e" stroke="#c2c2c2" stroke-width="1.4"/><circle cx="918.4" cy="546.75" r="4" fill="#3e3e3e" stroke="#c2c2c2" stroke-width="1.4"/><circle cx="918.4" cy="567.3" r="4" fill="#3e3e3e" stroke="#c2c2c2" stroke-width="1.4"/><circle cx="918.4" cy="587.85" r="4" fill="#3e3e3e" stroke="#c2c2c2" stroke-width="1.4"/><circle cx="918.4" cy="608.4" r="4" fill="#3e3e3e" stroke="#c2c2c2" stroke-width="1.4"/><path d="M937 475H943.6V480.4Z" fill="#e6e6e6"/><rect x="944" y="474.7" width="11.6" height="15" fill="#2e2e2e"/><path d="M946 484.4H953.6L949.8 479.8Z" fill="#f0f0f0"/><rect x="944" y="613" width="11.6" height="15.4" fill="#2e2e2e"/><path d="M946 618.6H953.6L949.8 623.2Z" fill="#f0f0f0"/><rect x="800.6" y="476.7" width="16" height="16" fill="#fff" stroke="#262626" stroke-width=".9"/><rect x="819.8" y="496.9" width="16.8" height="16.4" fill="#fff" stroke="#111" stroke-width="1.1"/><rect x="800.6" y="517.8" width="16" height="16" fill="#fff" stroke="#262626" stroke-width=".9"/><rect x="801.6" y="518.8" width="14" height="14" rx="3.2" fill="#e9435c"/><path d="M806.3 529.2V522.6L812.4 521.6V528.2" fill="none" stroke="#fff" stroke-width="1.2"/><ellipse cx="805.3" cy="529.3" rx="1.5" ry="1.2" fill="#fff"/><ellipse cx="811.4" cy="528.3" rx="1.5" ry="1.2" fill="#fff"/><rect x="800.6" y="538.35" width="16" height="16" fill="#fff" stroke="#262626" stroke-width=".9"/><rect x="801.6" y="539.35" width="14" height="14" rx="3.2" fill="#e9435c"/><path d="M806.3 549.75V543.15L812.4 542.15V548.75" fill="none" stroke="#fff" stroke-width="1.2"/><ellipse cx="805.3" cy="549.85" rx="1.5" ry="1.2" fill="#fff"/><ellipse cx="811.4" cy="548.85" rx="1.5" ry="1.2" fill="#fff"/><rect x="800.6" y="558.9" width="16" height="16" fill="#fff" stroke="#262626" stroke-width=".9"/><circle cx="807.4" cy="567.3" r="6" fill="#e2403c"/><circle cx="807.4" cy="567.3" r="4.5" fill="#f0b43c"/><circle cx="807.4" cy="567.3" r="3.3" fill="#59b86a"/><circle cx="807.4" cy="567.3" r="2" fill="#2f9aa8"/><circle cx="807.4" cy="567.3" r=".8" fill="#233"/><path d="M812.6 564.3L815.8 561.9" stroke="#e86a8a" stroke-width="1.6"/><rect x="813.2" y="560.3" width="2.6" height="1.6" fill="#58c8d8"/><rect x="800.6" y="579.45" width="16" height="16" fill="#fff" stroke="#262626" stroke-width=".9"/><circle cx="808.6" cy="587.45" r="6.6" fill="#2583d6"/><circle cx="808.6" cy="587.45" r="4.9" fill="#3fa2ea"/><path d="M806.9 584.65V590.25L811.8 587.45Z" fill="#fff"/><rect x="800.6" y="600" width="16" height="16" fill="#fff" stroke="#262626" stroke-width=".9"/><rect x="801.4" y="600.8" width="14.4" height="14.4" rx="3" fill="#9bcb3b"/><circle cx="809.4" cy="604.2" r="1.2" fill="#2a3a1a"/><path d="M809 605.6L807.8 609L809.6 610.6L808.6 613M807.8 609L806.2 611.6M809 606.6L811 608" fill="none" stroke="#2a3a1a" stroke-width="1.3"/><g clip-path="url(#cl8)"><rect x="800.6" y="620.55" width="16" height="16" fill="#fff" stroke="#262626" stroke-width=".9"/><circle cx="806.4" cy="627.15" r="3.6" fill="#f0683c"/><circle cx="810.6" cy="626.55" r="3.4" fill="#f6a03a"/><circle cx="808.4" cy="629.55" r="3" fill="#ee4a3c"/></g></svg>
<svg class="ic" style="left:961px;top:86px" width="39" height="567" viewBox="961 86 39 567"><path d="M991.2 89.2V94.2L988.2 91.7ZM995.6 89.2V94.2L992.6 91.7Z" fill="#cdcdcd"/><path d="M971 102.2H990.6" stroke="#1d1d1d" stroke-width="3.6" stroke-dasharray="1 1"/><path d="M971 170.2H990.6" stroke="#1d1d1d" stroke-width="3.6" stroke-dasharray="1 1"/><path d="M971 264.8H990.6" stroke="#1d1d1d" stroke-width="3.6" stroke-dasharray="1 1"/><path d="M971 359.3H990.6" stroke="#1d1d1d" stroke-width="3.6" stroke-dasharray="1 1"/><path d="M971 453.8H990.6" stroke="#1d1d1d" stroke-width="3.6" stroke-dasharray="1 1"/><path d="M963 164.6H1000" stroke="#333" stroke-width="1.2"/><path d="M963 165.7H1000" stroke="#555" stroke-width=".8"/><path d="M963 259.4H1000" stroke="#333" stroke-width="1.2"/><path d="M963 260.5H1000" stroke="#555" stroke-width=".8"/><path d="M963 354H1000" stroke="#333" stroke-width="1.2"/><path d="M963 355.1H1000" stroke="#555" stroke-width=".8"/><path d="M963 448.2H1000" stroke="#333" stroke-width="1.2"/><path d="M963 449.3H1000" stroke="#555" stroke-width=".8"/><path d="M963 516.4H1000" stroke="#333" stroke-width="1.2"/><path d="M963 517.5H1000" stroke="#555" stroke-width=".8"/><path d="M981.6 113.6C987 113.6 991 116.6 991 120.6C991 125 986.6 127.9 980.8 127.9C975.4 127.9 971.6 125.2 971.6 121.2C971.6 117.6 974.6 115.2 978 114.6C979 116.4 981.4 116 981.6 113.6Z" fill="#d2d2d2"/><g fill="#484848"><circle cx="975.6" cy="120.6" r="1.4"/><circle cx="978.8" cy="124.4" r="1.4"/><circle cx="983.4" cy="124.4" r="1.4"/><circle cx="987" cy="121" r="1.4"/><circle cx="985" cy="117.2" r="1.3"/></g><defs><linearGradient id="dg1" x1="0" y1="0" x2=".7" y2="1"><stop offset="0" stop-color="#e6e6e6"/><stop offset="1" stop-color="#333"/></linearGradient><linearGradient id="dg2"><stop offset="0" stop-color="#3a3a3a"/><stop offset="1" stop-color="#dedede"/></linearGradient></defs><path d="M974 140.4A16 16 0 0 1 990 156H974Z" fill="url(#dg1)" stroke="#d8d8d8" stroke-width="1.2"/><rect x="973.4" y="183.2" width="16.4" height="10" fill="#2c2c2c" stroke="#d8d8d8" stroke-width="1.2"/><rect x="984.6" y="183.8" width="4.6" height="4" fill="#bdbdbd"/><rect x="974" y="188.6" width="4.8" height="4" fill="#8a8a8a"/><path d="M979 183V193.4M984.4 183V193.4M973 188.2H990" stroke="#d8d8d8" stroke-width="1"/><rect x="978.4" y="216.8" width="7.8" height="7.8" fill="#a4a4a4"/><path d="M978.4 219.4H986.2M978.4 222H986.2M981 216.8V224.6M983.6 216.8V224.6" stroke="#8a8a8a" stroke-width=".7"/><path d="M980.2 216.6L976.6 210.6M982.2 216.6V209.6M984.2 216.6L987.4 211" stroke="#cfcfcf" stroke-width="1.3"/><path d="M975 207L978 209.8L976.2 212.2Z" fill="#dcdcdc"/><rect x="981.2" y="205.8" width="2.2" height="4.6" rx="1" fill="#e2e2e2"/><ellipse cx="988.2" cy="209.6" rx="2.6" ry="1.8" transform="rotate(-30 988.2 209.6)" fill="#e2e2e2"/><g fill="#cfcfcf"><circle cx="981.6" cy="238.4" r="4.1"/><circle cx="977.2" cy="243.8" r="4.1"/><circle cx="986" cy="243.8" r="4.1"/><path d="M981.6 243L983.4 248.6H986V249.9H977.2V248.6H979.8Z"/></g><path d="M973.2 277.2H990.4" stroke="#cfcfcf" stroke-width="1.1"/><path d="M973.2 281.7H990.4" stroke="#d4d4d4" stroke-width="2.3"/><path d="M973.2 286.6H990.4" stroke="#d8d8d8" stroke-width="3"/><rect x="973.6" y="304.5" width="16.4" height="11" fill="url(#dg2)" stroke="#d4d4d4" stroke-width="1.3"/><circle cx="977.8" cy="335" r="5.8" fill="#cdcdcd"/><circle cx="983.8" cy="339.6" r="5.2" fill="#6c6c6c" stroke="#dcdcdc" stroke-width="1.4"/><g fill="none" stroke="#d2d2d2" stroke-width="1.9"><path d="M977.4 383.6C973.8 383.6 972 381 972 378.6C972 375.6 974.4 373.6 977 373.8C978.4 371.4 981.2 370.6 983.8 371.4C986.2 372.2 987.4 374 987.6 375.4C989.8 375.8 991.2 377.4 991.2 379.4C991.2 381.8 989.4 383.6 986.8 383.6Z"/><path d="M977 381C975.6 379.4 976.2 377.4 978 376.8C980.6 376 982.4 379.6 985 379.8C987 380 988 378.4 987.4 376.8"/></g><circle cx="981.6" cy="405" r="5.4" fill="#c4c4c4"/><circle cx="981.6" cy="405" r="8" fill="none" stroke="#cfcfcf" stroke-width="1.5" stroke-dasharray="2 1.6"/><rect x="977" y="425.4" width="13.6" height="12.8" fill="none" stroke="#d2d2d2" stroke-width="1.3"/><rect x="973.4" y="432" width="5.6" height="5.6" fill="#484848" stroke="#d8d8d8" stroke-width="1.1"/><rect x="976.2" y="434.8" width="5.6" height="5.6" fill="#484848" stroke="#d8d8d8" stroke-width="1.1"/><rect x="967.2" y="460.3" width="27.6" height="22.6" rx="3" fill="#313131"/><path d="M982 463.8L990.8 468.4L982 473L973.2 468.4Z" fill="#d6d6d6"/><path d="M973.2 472.6L975.8 471.2L982 474.4L988.2 471.2L990.8 472.6L982 477.2Z" fill="#e2e2e2" transform="translate(0 3.6)"/><rect x="973" y="490.6" width="10.4" height="13" fill="#484848" stroke="#d2d2d2" stroke-width="1.3"/><rect x="977" y="497.6" width="13" height="9.6" fill="#565656" stroke="#d8d8d8" stroke-width="1.3"/></svg>
<svg class="ic" style="left:947.2px;top:110.4px;" width="11" height="8" viewBox="0 0 11 8"><path d="M0 7.4H10.6L5.3 .8Z" fill="#f0f0f0"/></svg>
<svg class="ic" style="left:295px;top:92.4px;" width="7" height="7" viewBox="0 0 7 7"><path d="M.8 .8L6.2 6.2M6.2 .8L.8 6.2" stroke="#dcdcdc" stroke-width="1.3"/></svg>
<span class="lat" style="left:767.8px;top:635px;font-size:38px;font-weight:bold;color:rgba(236,236,236,.86);text-shadow:0 0 2px rgba(40,40,40,.55);letter-spacing:1px;-webkit-text-stroke:.5px rgba(236,236,236,.86)">Bai</span>
<svg class="ic" style="left:826px;top:610px;overflow:hidden" width="60" height="43" viewBox="0 0 60 43"><g fill="rgba(210,210,210,.9)"><ellipse cx="22.2" cy="12" rx="6.5" ry="8.8"/><ellipse cx="38.3" cy="12.6" rx="6.4" ry="8.4"/><ellipse cx="9.6" cy="25.4" rx="6.5" ry="8" transform="rotate(-12 9.6 25.4)"/><ellipse cx="48.8" cy="27.4" rx="5.8" ry="7.8" transform="rotate(12 48.8 27.4)"/><path d="M30 26.4C36 26.4 39.5 31 43.5 35.5C47 39.5 47.5 43 47 46H13C12.5 42.5 13.5 39.5 17 35.5C21 31 24 26.4 30 26.4Z"/></g></svg>
<span class="tx " style="left:883.5px;top:634.1px;width:50.0px;height:31.2px;font-size:25px;font-weight:bold;color:rgba(236,236,236,.86)">经验</span>
<div style="left:906px;top:634.5px;width:94px;height:19px;background:#fff;border-radius:9px 7px 0 0;overflow:hidden"><svg class="ic" style="left:0px;top:0px;" width="94" height="19" viewBox="0 0 94 19"><path d="M12.4 5V19M19.4 5V19M8 8.4H12.4M8 12.4H12.4M19.4 8.4H24M19.4 12.4H24M8 16.6H12.4M19.4 16.6H24" stroke="#111" stroke-width="1.7"/><path d="M28 10H35M27 14H36M29 18H34" stroke="#dcdcdc" stroke-width="1.6"/><circle cx="65.2" cy="25.6" r="16" fill="#0a0a0a"/><path d="M65.2 11.8L73.4 19.4H57Z" fill="#fff"/></svg></div>
</div>
</body></html>
